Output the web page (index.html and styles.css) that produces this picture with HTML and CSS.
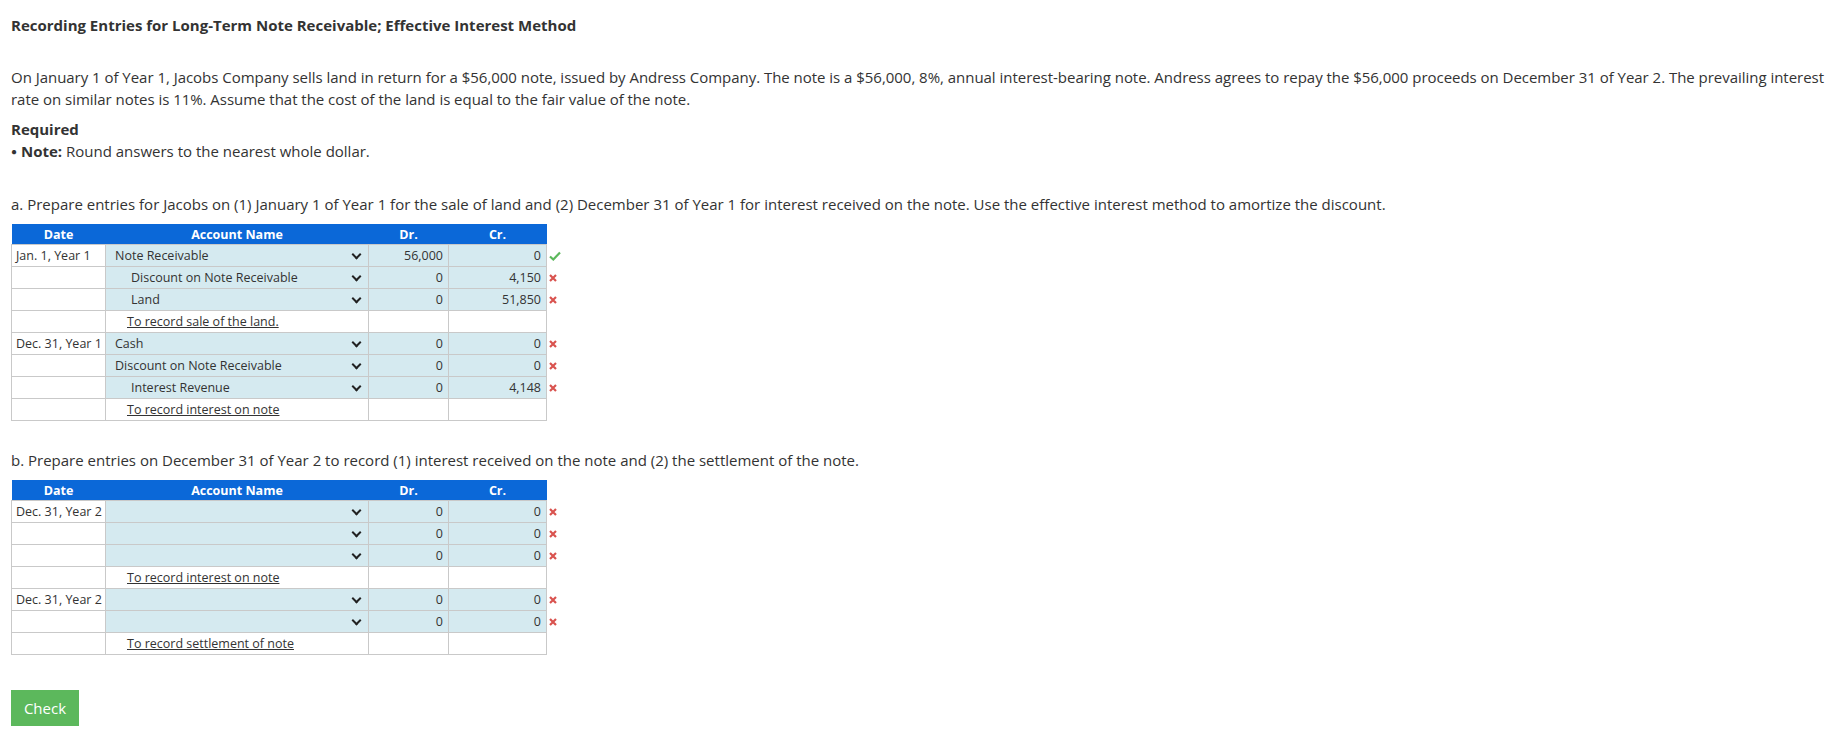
FILE: index.html
```html
<!DOCTYPE html>
<html>
<head>
<meta charset="utf-8">
<link rel="stylesheet" href="styles.css">
</head>
<body>
<div class="page">
  <h1 class="title">Recording Entries for Long-Term Note Receivable; Effective Interest Method</h1>
  <p class="intro">On January 1 of Year 1, Jacobs Company sells land in return for a $56,000 note, issued by Andress Company. The note is a $56,000, 8%, annual interest-bearing note. Andress agrees to repay the $56,000 proceeds on December 31 of Year 2. The prevailing interest rate on similar notes is 11%. Assume that the cost of the land is equal to the fair value of the note.</p>
  <div class="required">Required</div>
  <div class="note"><span class="bullet">&#9679;</span> <b>Note:</b> Round answers to the nearest whole dollar.</div>

  <p class="part part-a">a. Prepare entries for Jacobs on (1) January 1 of Year 1 for the sale of land and (2) December 31 of Year 1 for interest received on the note. Use the effective interest method to amortize the discount.</p>
  <table class="journal">
    <colgroup><col class="c-date"><col class="c-acct"><col class="c-dr"><col class="c-cr"><col class="c-mark"></colgroup>
    <thead>
      <tr><th>Date</th><th>Account Name</th><th>Dr.</th><th>Cr.</th><th class="mark"></th></tr>
    </thead>
    <tbody>
      <tr><td class="date">Jan. 1, Year 1</td><td class="acct"><div class="sel"><span>Note Receivable</span><i class="chev"></i></div></td><td class="num">56,000</td><td class="num">0</td><td class="mark"><svg viewBox="0 0 12 10" width="12" height="10"><path d="M1 5.5 L4.3 8.5 L11 1.5" fill="none" stroke="#5cb85c" stroke-width="2.2"/></svg></td></tr>
      <tr><td class="date"></td><td class="acct"><div class="sel"><span class="ind">Discount on Note Receivable</span><i class="chev"></i></div></td><td class="num">0</td><td class="num">4,150</td><td class="mark"><svg viewBox="0 0 8 8" width="8" height="8"><path d="M1 1 L7 7 M7 1 L1 7" stroke="#d9534f" stroke-width="2.2"/></svg></td></tr>
      <tr><td class="date"></td><td class="acct"><div class="sel"><span class="ind">Land</span><i class="chev"></i></div></td><td class="num">0</td><td class="num">51,850</td><td class="mark"><svg viewBox="0 0 8 8" width="8" height="8"><path d="M1 1 L7 7 M7 1 L1 7" stroke="#d9534f" stroke-width="2.2"/></svg></td></tr>
      <tr><td class="date"></td><td class="plain"><span class="memo-text">To record sale of the land.</span></td><td class="plain"></td><td class="plain"></td><td class="mark"></td></tr>
      <tr><td class="date">Dec. 31, Year 1</td><td class="acct"><div class="sel"><span>Cash</span><i class="chev"></i></div></td><td class="num">0</td><td class="num">0</td><td class="mark"><svg viewBox="0 0 8 8" width="8" height="8"><path d="M1 1 L7 7 M7 1 L1 7" stroke="#d9534f" stroke-width="2.2"/></svg></td></tr>
      <tr><td class="date"></td><td class="acct"><div class="sel"><span>Discount on Note Receivable</span><i class="chev"></i></div></td><td class="num">0</td><td class="num">0</td><td class="mark"><svg viewBox="0 0 8 8" width="8" height="8"><path d="M1 1 L7 7 M7 1 L1 7" stroke="#d9534f" stroke-width="2.2"/></svg></td></tr>
      <tr><td class="date"></td><td class="acct"><div class="sel"><span class="ind">Interest Revenue</span><i class="chev"></i></div></td><td class="num">0</td><td class="num">4,148</td><td class="mark"><svg viewBox="0 0 8 8" width="8" height="8"><path d="M1 1 L7 7 M7 1 L1 7" stroke="#d9534f" stroke-width="2.2"/></svg></td></tr>
      <tr><td class="date"></td><td class="plain"><span class="memo-text">To record interest on note</span></td><td class="plain"></td><td class="plain"></td><td class="mark"></td></tr>
    </tbody>
  </table>

  <p class="part part-b">b. Prepare entries on December 31 of Year 2 to record (1) interest received on the note and (2) the settlement of the note.</p>
  <table class="journal">
    <colgroup><col class="c-date"><col class="c-acct"><col class="c-dr"><col class="c-cr"><col class="c-mark"></colgroup>
    <thead>
      <tr><th>Date</th><th>Account Name</th><th>Dr.</th><th>Cr.</th><th class="mark"></th></tr>
    </thead>
    <tbody>
      <tr><td class="date">Dec. 31, Year 2</td><td class="acct"><div class="sel"><span></span><i class="chev"></i></div></td><td class="num">0</td><td class="num">0</td><td class="mark"><svg viewBox="0 0 8 8" width="8" height="8"><path d="M1 1 L7 7 M7 1 L1 7" stroke="#d9534f" stroke-width="2.2"/></svg></td></tr>
      <tr><td class="date"></td><td class="acct"><div class="sel"><span></span><i class="chev"></i></div></td><td class="num">0</td><td class="num">0</td><td class="mark"><svg viewBox="0 0 8 8" width="8" height="8"><path d="M1 1 L7 7 M7 1 L1 7" stroke="#d9534f" stroke-width="2.2"/></svg></td></tr>
      <tr><td class="date"></td><td class="acct"><div class="sel"><span></span><i class="chev"></i></div></td><td class="num">0</td><td class="num">0</td><td class="mark"><svg viewBox="0 0 8 8" width="8" height="8"><path d="M1 1 L7 7 M7 1 L1 7" stroke="#d9534f" stroke-width="2.2"/></svg></td></tr>
      <tr><td class="date"></td><td class="plain"><span class="memo-text">To record interest on note</span></td><td class="plain"></td><td class="plain"></td><td class="mark"></td></tr>
      <tr><td class="date">Dec. 31, Year 2</td><td class="acct"><div class="sel"><span></span><i class="chev"></i></div></td><td class="num">0</td><td class="num">0</td><td class="mark"><svg viewBox="0 0 8 8" width="8" height="8"><path d="M1 1 L7 7 M7 1 L1 7" stroke="#d9534f" stroke-width="2.2"/></svg></td></tr>
      <tr><td class="date"></td><td class="acct"><div class="sel"><span></span><i class="chev"></i></div></td><td class="num">0</td><td class="num">0</td><td class="mark"><svg viewBox="0 0 8 8" width="8" height="8"><path d="M1 1 L7 7 M7 1 L1 7" stroke="#d9534f" stroke-width="2.2"/></svg></td></tr>
      <tr><td class="date"></td><td class="plain"><span class="memo-text">To record settlement of note</span></td><td class="plain"></td><td class="plain"></td><td class="mark"></td></tr>
    </tbody>
  </table>

  <button class="check-btn" type="button">Check</button>
</div>
</body>
</html>
```

FILE: styles.css
```css
html, body {
  margin: 0;
  padding: 0;
  background: #fff;
}
body {
  font-family: "Open Sans", "Liberation Sans", sans-serif;
  color: #333;
}
.page {
  padding: 15px 2px 20px 11px;
}
.title {
  font-size: 15px;
  font-weight: 700;
  line-height: 20px;
  margin: 0 0 31px 0;
  color: #333;
}
.intro {
  font-size: 15px;
  line-height: 22px;
  letter-spacing: -0.03px;
  margin: 0 0 9px 0;
}
.required {
  font-size: 15px;
  font-weight: 700;
  line-height: 21px;
}
.note {
  font-size: 15px;
  line-height: 22px;
}
.note .bullet {
  font-size: 10px;
  vertical-align: 2px;
}
.part {
  font-size: 15px;
  line-height: 22px;
  margin: 0 0 9px 0;
}
.part-a {
  margin-top: 31px;
}
.part-b {
  margin-top: 28px;
}
.journal {
  border-collapse: collapse;
  font-size: 12.5px;
  table-layout: fixed;
  width: 549px;
}
.c-date { width: 94px; }
.c-acct { width: 263px; }
.c-dr { width: 80px; }
.c-cr { width: 98px; }
.c-mark { width: 14px; }
.journal th {
  background: #0b68d8;
  color: #fff;
  font-weight: 700;
  font-size: 12.5px;
  height: 20px;
  padding: 0;
  text-align: center;
  border: none;
}
.journal th.mark {
  background: transparent;
}
.journal td {
  height: 21px;
  padding: 0;
  border: 1px solid #c9c9c9;
  white-space: nowrap;
}
.journal td.date {
  padding-left: 4px;
  background: #fff;
}
.journal td.acct {
  background: #d5eaf0;
  padding: 0 6px 0 9px;
}
.sel {
  display: flex;
  align-items: center;
  justify-content: space-between;
}
.sel .ind {
  padding-left: 16px;
}
.chev {
  width: 5px;
  height: 5px;
  border-right: 2px solid #222;
  border-bottom: 2px solid #222;
  transform: rotate(45deg);
  margin: -3px 2px 0 0;
}
.journal td.num {
  background: #d5eaf0;
  text-align: right;
  padding-right: 5px;
}
.journal td.plain {
  background: #fff;
}
.memo-text {
  padding-left: 21px;
  text-decoration: underline;
}
.journal td.mark {
  border: none;
  background: transparent;
  padding-left: 2px;
  text-align: left;
}
.mark svg {
  display: block;
}
.check-btn {
  display: block;
  margin-top: 35px;
  width: 68px;
  height: 36px;
  background: #5cb85c;
  color: #fff;
  border: none;
  font-family: "Open Sans", "Liberation Sans", sans-serif;
  font-size: 15px;
  padding: 0;
}
```
